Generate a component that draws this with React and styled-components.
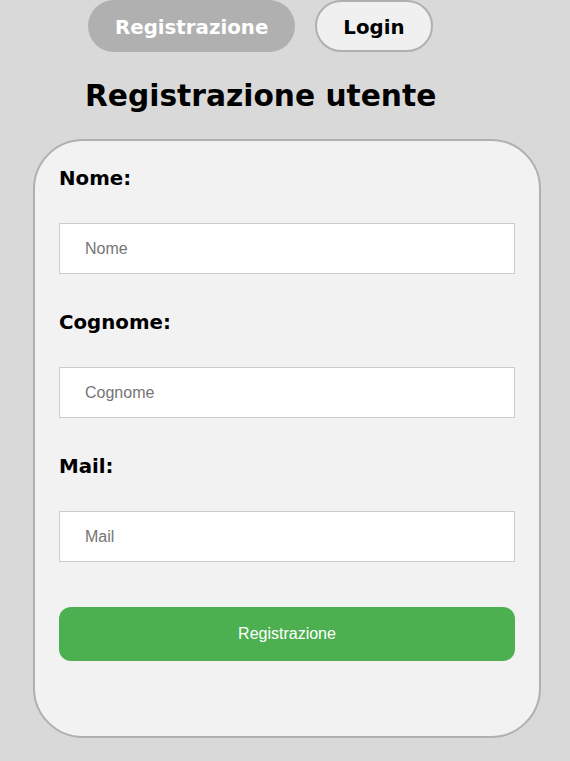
import React from 'react'
import styled, { createGlobalStyle } from 'styled-components'

const GlobalStyle = createGlobalStyle`
  html, body {
    margin: 0;
    padding: 0;
    background: #d9d9d9;
  }
  body {
    font-family: "DejaVu Sans", Verdana, sans-serif;
  }
`

const Page = styled.div`
  width: 570px;
  min-height: 761px;
  background: #d9d9d9;
`

const Tabs = styled.div`
  display: flex;
  gap: 20px;
  padding-left: 88px;
`

const Tab = styled.button`
  box-sizing: border-box;
  height: 52px;
  padding: 2px ${p => (p.$active ? '27px' : '26px')} 0;
  border-radius: 26px;
  border: ${p => (p.$active ? 'none' : '2px solid #b0b0b0')};
  background: ${p => (p.$active ? '#b0b0b0' : '#f0f0f0')};
  color: ${p => (p.$active ? '#fff' : '#000')};
  font-family: "DejaVu Sans", Verdana, sans-serif;
  font-weight: bold;
  font-size: 19.8px;
  cursor: pointer;
`

const Title = styled.h1`
  margin: 23px 0 22px 85px;
  font-size: 29.7px;
  line-height: 42px;
  font-weight: bold;
  color: #000;
`

const Card = styled.form`
  box-sizing: border-box;
  width: 508px;
  margin-left: 33px;
  padding: 26px 24px 75px;
  background: #f2f2f2;
  border: 2px solid #b0b0b0;
  border-radius: 50px;
  display: flex;
  flex-direction: column;
`

const Label = styled.label`
  display: block;
  font-size: 19.8px;
  line-height: 24px;
  font-weight: bold;
  color: #000;
  margin-bottom: 32px;
`

const Input = styled.input`
  box-sizing: border-box;
  width: 100%;
  height: 51px;
  padding: 0 25px;
  margin-bottom: 37px;
  border: 1px solid #ccc;
  background: #fff;
  font-family: "Liberation Sans", Arial, sans-serif;
  font-size: 16px;
  color: #333;
  outline: none;

  &::placeholder {
    color: #757575;
  }
`

const Submit = styled.button`
  margin-top: 8px;
  height: 54px;
  width: 100%;
  border: none;
  border-radius: 12px;
  background: #4caf50;
  color: #fff;
  font-family: "Liberation Sans", Arial, sans-serif;
  font-size: 16px;
  cursor: pointer;
`

const fields = [
  { id: 'nome', label: 'Nome:', placeholder: 'Nome' },
  { id: 'cognome', label: 'Cognome:', placeholder: 'Cognome' },
  { id: 'mail', label: 'Mail:', placeholder: 'Mail' },
]

export default function App() {
  return (
    <Page>
      <GlobalStyle />
      <Tabs>
        <Tab $active>Registrazione</Tab>
        <Tab>Login</Tab>
      </Tabs>
      <Title>Registrazione utente</Title>
      <Card onSubmit={e => e.preventDefault()}>
        {fields.map(f => (
          <React.Fragment key={f.id}>
            <Label htmlFor={f.id}>{f.label}</Label>
            <Input id={f.id} placeholder={f.placeholder} />
          </React.Fragment>
        ))}
        <Submit type="submit">Registrazione</Submit>
      </Card>
    </Page>
  )
}
